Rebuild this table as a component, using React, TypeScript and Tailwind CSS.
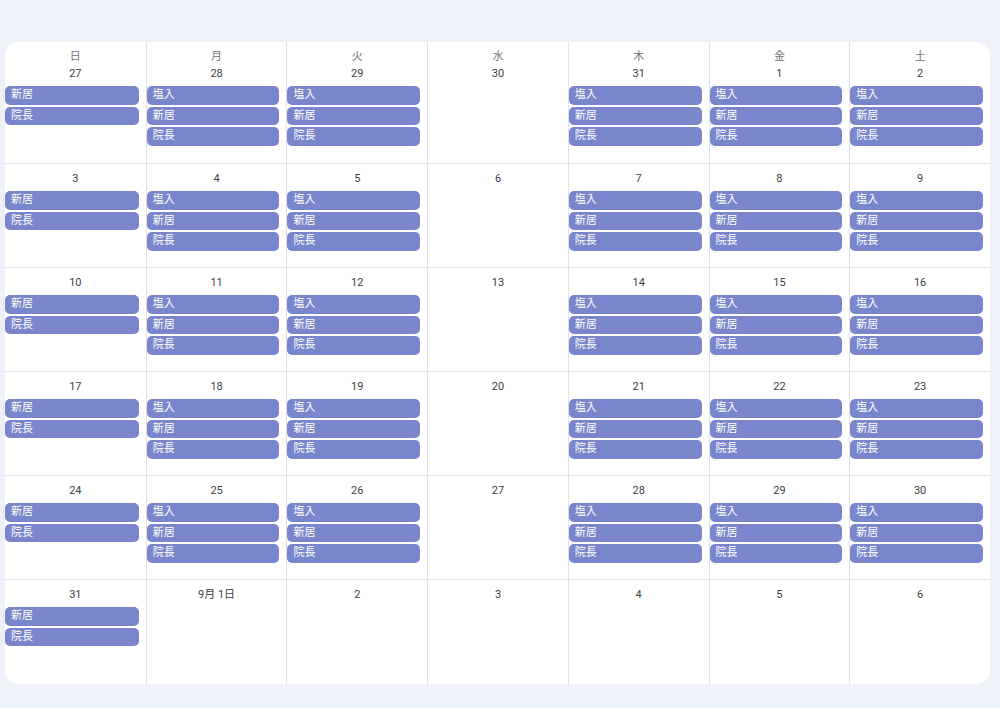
const weekdays = ["日", "月", "火", "水", "木", "金", "土"];

const full = ["塩入", "新居", "院長"];
const sun = ["新居", "院長"];

type Day = { label: string; events: string[] };

function week(dates: string[], wedEmpty = true): Day[] {
  return dates.map((d, i) => ({
    label: d,
    events: i === 0 ? sun : i === 3 && wedEmpty ? [] : full,
  }));
}

const weeks: Day[][] = [
  week(["27", "28", "29", "30", "31", "1", "2"]),
  week(["3", "4", "5", "6", "7", "8", "9"]),
  week(["10", "11", "12", "13", "14", "15", "16"]),
  week(["17", "18", "19", "20", "21", "22", "23"]),
  week(["24", "25", "26", "27", "28", "29", "30"]),
  ["31", "9月 1日", "2", "3", "4", "5", "6"].map((d, i) => ({
    label: d,
    events: i === 0 ? sun : [],
  })),
];

function Chip({ title }: { title: string }) {
  return (
    <div className="h-[18.5px] mb-[2px] rounded-[5px] bg-[#7986cb] pl-[6px] text-[11px] leading-[18.5px] text-white">
      {title}
    </div>
  );
}

export default function App() {
  return (
    <div
      className="w-[1000px] h-[708px] bg-[#eef2f8] pt-[42px] pl-[5px]"
      style={{ fontFamily: "Roboto, 'Noto Sans CJK JP', sans-serif" }}
    >
      <div className="w-[985px] h-[642px] bg-white rounded-[14px] overflow-hidden flex flex-col">
        {weeks.map((days, w) => (
          <div
            key={w}
            className={`grid grid-cols-7 ${w === 0 ? "h-[122px]" : "h-[104px]"} ${
              w < weeks.length - 1 ? "border-b border-[#dfe1e5]" : "flex-1"
            }`}
          >
            {days.map((day, i) => (
              <div
                key={i}
                className={`flex flex-col pt-[6px] ${i > 0 ? "border-l border-[#dfe1e5]" : ""}`}
              >
                {w === 0 && (
                  <div className="h-[17px] text-center text-[11px] leading-[17px] text-[#70757a]">
                    {weekdays[i]}
                  </div>
                )}
                <div className="h-[17px] text-center text-[11px] leading-[17px] text-[#3c4043]">
                  {day.label}
                </div>
                <div className="mt-[4px] pr-[7px]">
                  {day.events.map((e) => (
                    <Chip key={e} title={e} />
                  ))}
                </div>
              </div>
            ))}
          </div>
        ))}
      </div>
    </div>
  );
}
